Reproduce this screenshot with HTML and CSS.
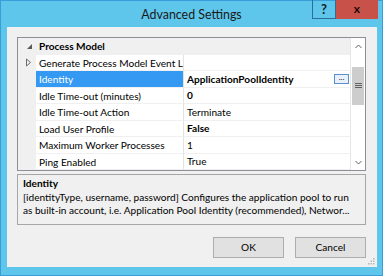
FILE: index.html
```html
<!DOCTYPE html>
<html>
<head>
<meta charset="utf-8">
<link rel="stylesheet" href="styles.css">
</head>
<body>
<div class="window">
  <div class="titlebar">
    <span></span>
    <span class="title">Advanced Settings</span>
    <div class="caption">
      <span class="cap-help">?</span>
      <span class="cap-close">x</span>
    </div>
  </div>
  <div class="client">
    <div class="grid">
      <div class="rows">
        <div class="row cat">
          <span class="gutter"><svg width="7" height="7" viewBox="0 0 7 7"><path d="M6 1 L6 6 L1 6 Z" fill="#595959"/></svg></span>
          <span class="name">Process Model</span>
        </div>
        <div class="row">
          <span class="gutter"><svg width="7" height="9" viewBox="0 0 7 9"><path d="M1.5 1 L5.5 4.5 L1.5 8 Z" fill="none" stroke="#6b6b6b" stroke-width="1"/></svg></span>
          <span class="name">Generate Process Model Event L</span>
          <span class="value"></span>
        </div>
        <div class="row sel">
          <span class="gutter"></span>
          <span class="name">Identity</span>
          <span class="value bold">ApplicationPoolIdentity<span class="dots">...</span></span>
        </div>
        <div class="row">
          <span class="gutter"></span>
          <span class="name">Idle Time-out (minutes)</span>
          <span class="value bold">0</span>
        </div>
        <div class="row">
          <span class="gutter"></span>
          <span class="name">Idle Time-out Action</span>
          <span class="value">Terminate</span>
        </div>
        <div class="row">
          <span class="gutter"></span>
          <span class="name">Load User Profile</span>
          <span class="value bold">False</span>
        </div>
        <div class="row">
          <span class="gutter"></span>
          <span class="name">Maximum Worker Processes</span>
          <span class="value">1</span>
        </div>
        <div class="row">
          <span class="gutter"></span>
          <span class="name">Ping Enabled</span>
          <span class="value">True</span>
        </div>
      </div>
      <div class="scrollbar">
        <span class="arrow"><svg width="7" height="5" viewBox="0 0 7 5"><path d="M0.5 4 L3.5 1 L6.5 4" fill="none" stroke="#606060" stroke-width="1"/></svg></span>
        <div class="track">
          <div class="thumb"><svg width="7" height="6" viewBox="0 0 7 6"><path d="M0 0.5 H7 M0 2.5 H7 M0 4.5 H7" stroke="#606060" stroke-width="1"/></svg></div>
        </div>
        <span class="arrow"><svg width="7" height="5" viewBox="0 0 7 5"><path d="M0.5 1 L3.5 4 L6.5 1" fill="none" stroke="#606060" stroke-width="1"/></svg></span>
      </div>
    </div>
    <div class="desc">
      <div class="desc-title">Identity</div>
      <div class="desc-text">[identityType, username, password] Configures the application pool to run<br>as built-in account, i.e. Application Pool Identity (recommended), Networ...</div>
    </div>
    <div class="buttons">
      <span class="btn">OK</span>
      <span class="btn">Cancel</span>
    </div>
    <div class="grip"><svg width="7" height="7" viewBox="0 0 7 7"><g fill="#b8b8b8"><rect x="5" y="0" width="1.5" height="1.5"/><rect x="2.5" y="2.5" width="1.5" height="1.5"/><rect x="5" y="2.5" width="1.5" height="1.5"/><rect x="0" y="5" width="1.5" height="1.5"/><rect x="2.5" y="5" width="1.5" height="1.5"/><rect x="5" y="5" width="1.5" height="1.5"/></g></svg></div>
  </div>
</div>
</body>
</html>
```

FILE: styles.css
```css
html, body {
  margin: 0;
  padding: 0;
}
body {
  font-family: "Lato", "Noto Sans", sans-serif;
  font-size: 10.1px;
  color: #000;
}
.window {
  width: 383px;
  height: 276px;
  box-sizing: border-box;
  background: #5ec6eb;
  border: 1px solid #3a9dda;
  display: flex;
  flex-direction: column;
}
.titlebar {
  height: 26px;
  display: grid;
  grid-template-columns: 1fr auto 1fr;
  align-items: start;
}
.title {
  font-size: 12.4px;
  color: #1a1a1a;
  line-height: 27px;
}
.caption {
  display: flex;
  justify-content: flex-end;
  margin-top: -1px;
  margin-right: 4px;
}
.cap-help {
  width: 22px;
  height: 18px;
  border: 1px solid #2b6f99;
  border-top: none;
  box-sizing: content-box;
  text-align: center;
  font-weight: bold;
  font-size: 13px;
  line-height: 18px;
  color: #0e1b26;
}
.cap-close {
  width: 42px;
  height: 19px;
  background: #c8514a;
  text-align: center;
  font-weight: bold;
  font-size: 12px;
  line-height: 17px;
  color: #1a0a08;
}
.client {
  flex: 1;
  margin: 0 5px 8px 6px;
  background: #f0f0f0;
  padding: 10px 11px 0 10px;
  display: flex;
  flex-direction: column;
  position: relative;
}
.grid {
  height: 134px;
  box-sizing: border-box;
  border: 1px solid #8c8f95;
  background: #fff;
  display: flex;
}
.rows {
  flex: 1;
  display: flex;
  flex-direction: column;
}
.row {
  height: 16.5px;
  display: flex;
  align-items: stretch;
  line-height: 16px;
  white-space: nowrap;
}
.gutter {
  width: 18px;
  flex: none;
  background: #f0f0f0;
  display: flex;
  align-items: center;
  justify-content: flex-end;
  padding-right: 4px;
  box-sizing: border-box;
}
.name {
  width: 148px;
  flex: none;
  padding-left: 3px;
  box-sizing: border-box;
  border-right: 1px solid #e3e3e3;
  border-bottom: 1px solid #f0f0f0;
  overflow: hidden;
}
.value {
  flex: 1;
  padding-left: 3px;
  border-bottom: 1px solid #f0f0f0;
  display: flex;
  align-items: center;
  justify-content: space-between;
}
.cat {
  background: #f0f0f0;
}
.cat .name {
  font-weight: bold;
  border: none;
  width: auto;
  padding-left: 3px;
}
.cat .gutter {
  padding-right: 3px;
}
.sel .name {
  background: #3399f3;
  color: #fff;
}
.bold {
  font-weight: bold;
}
.dots {
  width: 13px;
  height: 8px;
  border: 1px solid #5a8fd0;
  background: #e8f1fb;
  margin-right: 1px;
  font-weight: normal;
  font-size: 8px;
  line-height: 4px;
  text-align: center;
  color: #222;
}
.scrollbar {
  width: 14px;
  flex: none;
  background: #f0f0f0;
  border-left: 1px solid #e6e6e6;
  display: flex;
  flex-direction: column;
}
.arrow {
  height: 16px;
  display: flex;
  align-items: center;
  justify-content: center;
  background: #fff;
}
.track {
  flex: 1;
  padding-top: 13px;
  background: #fff;
}
.thumb {
  height: 38px;
  margin: 0 1px;
  background: #cdcdcd;
  display: flex;
  align-items: center;
  justify-content: center;
}
.desc {
  margin-top: 3px;
  height: 51px;
  box-sizing: border-box;
  border: 1px solid #a6a6a6;
  padding: 2px 5px;
}
.desc-title {
  font-weight: bold;
  line-height: 13px;
}
.desc-text {
  line-height: 12.5px;
  margin-top: 1px;
  white-space: nowrap;
}
.buttons {
  margin-top: 12px;
  display: flex;
  justify-content: flex-end;
  gap: 11px;
}
.btn {
  width: 71px;
  height: 21px;
  box-sizing: border-box;
  border: 1px solid #adadad;
  background: #e1e1e1;
  text-align: center;
  line-height: 19px;
}
.grip {
  position: absolute;
  right: 2px;
  bottom: 2px;
  line-height: 0;
}
```
